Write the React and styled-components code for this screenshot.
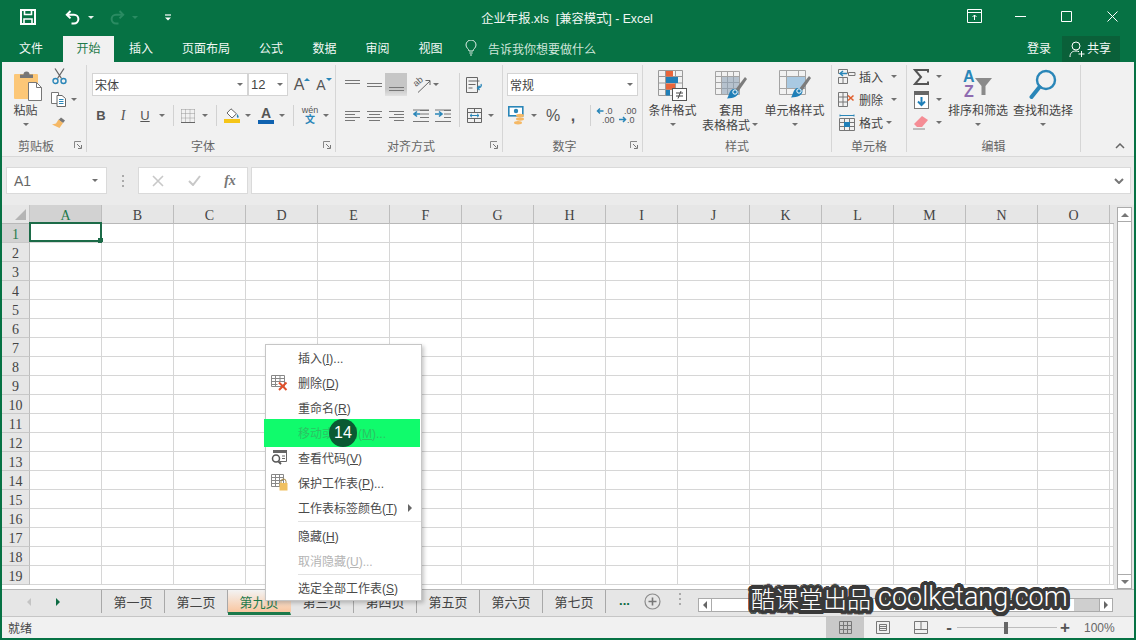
import React from 'react';
import styled, { createGlobalStyle } from 'styled-components';

const UI_FONT = '"Liberation Sans", "Noto Sans CJK SC", sans-serif';
const GREEN = '#067244';
const BLUE = '#2a86b8';

const GlobalStyle = createGlobalStyle`
  html, body { margin: 0; padding: 0; background: #fff; }
  * { box-sizing: border-box; }
  body { font-family: ${UI_FONT}; font-size: 12px; color: #444; }
`;

// dark rounded halo behind the watermark letters
const haloAt = radius =>
  Array.from({ length: 24 }, (_, i) => {
    const a = (i / 24) * Math.PI * 2;
    return `${(Math.cos(a) * radius).toFixed(1)}px ${(Math.sin(a) * radius).toFixed(1)}px 0 #3a3a3a`;
  }).join(', ');
const HALO = `${haloAt(4)}, ${haloAt(2.5)}, ${haloAt(1)}`;

// window frame
const Window = styled.div`
  position: relative;
  display: flex;
  flex-direction: column;
  width: 1136px;
  height: 640px;
  padding: 0 2px 2px;
  background: ${GREEN};
  overflow: hidden;
`;

// title bar
const TitleBar = styled.div`
  display: grid;
  grid-template-columns: 1fr auto 1fr;
  align-items: center;
  height: 36px;
  color: #fff;
`;
const Qat = styled.div`
  display: flex;
  align-items: center;
  padding: 0 0 2px 17px;
`;
const QatBtn = styled.span`
  display: flex;
  align-items: center;
  justify-content: center;
  width: ${p => p.$w}px;
  height: 24px;
  margin-left: ${p => p.$ml || 0}px;
`;
const QatCaret = styled.span`
  display: flex;
  justify-content: center;
  width: ${p => p.$w}px;
  margin-left: ${p => p.$ml || 0}px;
  &::after {
    content: '';
    border-left: 3px solid transparent;
    border-right: 3px solid transparent;
    border-top: 3px solid ${p => (p.$dim ? '#2a8b62' : '#e8f2ed')};
  }
`;
const Title = styled.div`
  font-size: 12.3px;
  white-space: pre;
  padding: 0 2px 0 0;
  color: #f2f7f4;
`;
const WinControls = styled.div`
  display: flex;
  justify-content: flex-end;
  margin-right: -1px;
  padding-bottom: 4px;
`;
const WinBtn = styled.span`
  display: flex;
  align-items: center;
  justify-content: center;
  width: 46px;
  height: 32px;
`;

// ribbon tabs
const TabsRow = styled.div`
  display: flex;
  align-items: stretch;
  height: 26px;
  color: #f3f8f5;
`;
const RibbonTab = styled.div`
  display: flex;
  align-items: center;
  justify-content: center;
  width: ${p => p.$w}px;
  padding: 0 ${p => p.$pr || 0}px 3px 0;
  background: ${p => (p.$active ? '#f1f1f1' : 'transparent')};
  color: ${p => (p.$active ? '#1f7a4c' : 'inherit')};
`;
const TellMe = styled.div`
  display: flex;
  align-items: center;
  gap: 11px;
  margin-left: 5px;
  padding: 0 0 2px 3px;
  color: #cfe5da;
`;
const Login = styled.div`
  display: flex;
  align-items: center;
  margin-left: auto;
  margin-right: 11px;
  padding-bottom: 4px;
`;
const ShareBtn = styled.div`
  display: flex;
  align-items: center;
  gap: 2px;
  width: 58px;
  padding-left: 7px;
  margin-right: 14px;
  background: #0a6039;
`;
const ShareText = styled.span`
  padding-bottom: 4px;
`;

// ribbon
const Ribbon = styled.div`
  display: flex;
  height: 95px;
  padding-top: 3px;
  background: #f1f1f1;
  border-bottom: 1px solid #d8d8d8;
`;
const Group = styled.div`
  display: flex;
  flex-direction: column;
  width: ${p => p.$w}px;
  height: 87px;
  border-right: 1px solid #d6d6d6;
`;
const GroupBody = styled.div`
  display: flex;
  height: 73px;
  padding-left: ${p => p.$pl || 0}px;
`;
const GroupLabel = styled.div`
  display: flex;
  align-items: center;
  height: 14px;
  color: #666;
`;
const LabelText = styled.span`
  flex: 1;
  text-align: center;
`;
const Launcher = styled.span`
  display: flex;
  justify-content: center;
  width: 16px;
`;
const Collapse = styled.div`
  flex: 1;
  display: flex;
  align-items: flex-end;
  justify-content: flex-end;
  padding: 0 9px 7px 0;
`;
const Rows = styled.div`
  display: flex;
  flex-direction: column;
  gap: 8px;
  padding-top: 8px;
  width: ${p => (p.$w ? `${p.$w}px` : 'auto')};
`;
const Row = styled.div`
  display: flex;
  align-items: center;
  height: 23px;
`;
const Stack = styled.div`
  display: flex;
  flex-direction: column;
  width: ${p => p.$w}px;
`;
const Tool = styled.span`
  display: flex;
  align-items: center;
  justify-content: center;
  width: ${p => p.$w || 22}px;
  height: 23px;
  margin-left: ${p => p.$ml || 0}px;
  background: ${p => (p.$on ? 'linear-gradient(#c6c6c6 70%, #e2e2e2)' : 'transparent')};
`;
const Caret = styled.span`
  display: flex;
  align-items: center;
  justify-content: center;
  width: ${p => p.$w || 10}px;
  height: ${p => p.$h || 23}px;
  margin-left: ${p => p.$ml || 0}px;
  &::after {
    content: '';
    border-left: 3px solid transparent;
    border-right: 3px solid transparent;
    border-top: 3px solid #707070;
  }
`;
const VSep = styled.span`
  width: 1px;
  height: ${p => p.$h || 21}px;
  margin: ${p => p.$mt || 0}px ${p => p.$r || 0}px 0 ${p => p.$l || 0}px;
  background: #d2d2d2;
`;
const Select = styled.div`
  display: flex;
  align-items: center;
  justify-content: space-between;
  width: ${p => p.$w}px;
  height: 23px;
  margin-left: ${p => p.$ml || 0}px;
  padding: 0 4px 0 2px;
  background: #fff;
  border: 1px solid #d4d4d4;
  font-size: ${p => p.$fs || 12}px;
`;
const LargeBtn = styled.div`
  display: flex;
  flex-direction: column;
  align-items: center;
  width: ${p => p.$w}px;
  white-space: nowrap;
`;
const LargeIcon = styled.div`
  display: flex;
  align-items: center;
  justify-content: center;
  height: 37px;
  padding: 3px 0 0 ${p => p.$pl || 0}px;
`;
const LargeText = styled.div`
  display: flex;
  align-items: center;
  height: 15px;
`;
const CellRow = styled.div`
  display: flex;
  align-items: center;
  height: 23px;
  padding-left: 3px;
`;
const CellText = styled.span`
  width: 24px;
  margin-right: ${p => p.$mr}px;
`;
const FontLetter = styled.span`
  font-size: ${p => p.$fs}px;
  font-weight: ${p => (p.$bold ? 700 : 400)};
  font-style: ${p => (p.$italic ? 'italic' : 'normal')};
  font-family: ${p => (p.$serif ? '"Liberation Serif", serif' : UI_FONT)};
  text-decoration: ${p => (p.$under ? 'underline' : 'none')};
  color: #555;
  line-height: 1;
`;
const Mark = styled.span`
  align-self: flex-start;
  margin: 5px -6px 0 0;
  border-left: 3px solid transparent;
  border-right: 3px solid transparent;
  ${p => (p.$down ? `border-top: 3px solid ${BLUE};` : `border-bottom: 3px solid ${BLUE};`)}
`;
const ColorA = styled.span`
  display: flex;
  flex-direction: column;
  align-items: center;
  width: 16px;
  font-size: 14px;
  font-weight: 700;
  line-height: 12px;
  color: #555;
  &::after {
    content: '';
    width: 16px;
    height: 4px;
    margin-top: 1px;
    background: #0f62b0;
  }
`;
const PhoneticBtn = styled.span`
  display: flex;
  flex-direction: column;
  align-items: center;
  font-size: 9px;
  line-height: 9px;
  color: #555;
  & b {
    font-size: 10px;
    line-height: 10px;
    color: ${BLUE};
  }
`;
const PercentMark = styled.span`
  font-size: 16px;
  font-weight: ${p => (p.$bold ? 700 : 400)};
  color: #555;
`;

// formula bar
const FormulaBar = styled.div`
  display: flex;
  align-items: flex-start;
  height: 48px;
  padding: 10px 3px 0 4px;
  background: #ebebeb;
`;
const NameBox = styled.div`
  display: flex;
  align-items: center;
  justify-content: space-between;
  width: 101px;
  height: 27px;
  padding: 0 7px;
  background: #fff;
  border: 1px solid #dadada;
  font-size: 14px;
  color: #666;
`;
const GripDots = styled.span`
  display: flex;
  justify-content: center;
  width: 31px;
  height: 27px;
  align-items: center;
`;
const FxBox = styled.div`
  display: grid;
  grid-template-columns: 37px 37px 1fr;
  align-items: center;
  justify-items: center;
  width: 110px;
  height: 27px;
  background: #fff;
  border: 1px solid #dadada;
`;
const FxText = styled.span`
  font-family: "Liberation Serif", serif;
  font-style: italic;
  font-weight: 700;
  font-size: 14px;
  color: #777;
`;
const FormulaInput = styled.div`
  flex: 1;
  display: flex;
  align-items: center;
  justify-content: flex-end;
  height: 27px;
  margin-left: 3px;
  padding-right: 6px;
  background: #fff;
  border: 1px solid #dadada;
`;

// worksheet
const SheetArea = styled.div`
  display: flex;
  height: 384px;
  background: #e6e6e6;
`;
const Grid = styled.div`
  display: grid;
  grid-template-columns: 28px repeat(15, 72px) 4px;
  grid-auto-rows: 19px;
  width: 1112px;
  background: #fff;
  font-family: "Liberation Serif", serif;
  font-size: 14px;
  color: #444;
`;
const Corner = styled.div`
  display: flex;
  align-items: flex-end;
  justify-content: flex-end;
  padding: 0 3px 3px 0;
  background: #e6e6e6;
  border-right: 1px solid #c4c4c4;
  border-bottom: 1px solid #b8b8b8;
  &::after {
    content: '';
    border-left: 11px solid transparent;
    border-bottom: 11px solid #b4b4b4;
  }
`;
const ColHead = styled.div`
  display: flex;
  justify-content: center;
  align-items: flex-end;
  line-height: 15px;
  background: ${p => (p.$active ? '#d2d2d2' : '#e6e6e6')};
  color: ${p => (p.$active ? '#1f7a4c' : '#444')};
  border-right: 1px solid #bdbdbd;
  border-bottom: 1px solid #b8b8b8;
`;
const HeadFiller = styled.div`
  background: #e6e6e6;
  border-bottom: 1px solid #b8b8b8;
`;
const RowHead = styled.div`
  display: flex;
  justify-content: center;
  align-items: center;
  padding-top: 4px;
  background: ${p => (p.$active ? '#d2d2d2' : '#e6e6e6')};
  color: ${p => (p.$active ? '#1f7a4c' : '#444')};
  border-right: 1px solid #bdbdbd;
  border-bottom: 1px solid #c8c8c8;
`;
const Cell = styled.div`
  position: relative;
  border-right: 1px solid #d6d6d6;
  border-bottom: 1px solid #d6d6d6;
`;
const Selection = styled.div`
  position: absolute;
  top: -2px;
  left: -1px;
  right: -1px;
  bottom: 0;
  border: 2px solid #1c6b48;
  &::after {
    content: '';
    position: absolute;
    right: -3px;
    bottom: -3px;
    width: 5px;
    height: 5px;
    background: #1c6b48;
  }
`;
const VScroll = styled.div`
  display: flex;
  flex-direction: column;
  width: 15px;
  margin: 2px 0 0 3px;
  background: #fff;
  border-left: 1px solid #ababab;
  border-right: 1px solid #ababab;
`;
const ScrollBtn = styled.span`
  display: flex;
  align-items: center;
  justify-content: center;
  flex: none;
  height: 15px;
  background: #fff;
  border: 1px solid #ababab;
  margin: 0 -1px;
`;
const ScrollSpace = styled.div`
  flex: 1;
`;
const Tri = styled.span`
  width: 0;
  height: 0;
  ${p => p.$dir === 'up' && `border-left:4px solid transparent;border-right:4px solid transparent;border-bottom:4px solid ${p.$c || '#777'};`}
  ${p => p.$dir === 'down' && `border-left:4px solid transparent;border-right:4px solid transparent;border-top:4px solid ${p.$c || '#777'};`}
  ${p => p.$dir === 'left' && `border-top:4px solid transparent;border-bottom:4px solid transparent;border-right:4px solid ${p.$c || '#777'};`}
  ${p => p.$dir === 'right' && `border-top:4px solid transparent;border-bottom:4px solid transparent;border-left:4px solid ${p.$c || '#777'};`}
`;

// sheet tabs
const TabBar = styled.div`
  display: flex;
  align-items: flex-start;
  height: 28px;
  background: #e6e6e6;
  border-top: 1px solid #b8b8b8;
  border-bottom: 1px solid #c6c6c6;
`;
const TabNav = styled.div`
  display: flex;
  align-items: center;
  gap: 25px;
  width: 100px;
  height: 23px;
  padding-left: 25px;
  border-right: 1px solid #a8a8a8;
`;
const SheetTab = styled.div`
  display: flex;
  align-items: center;
  justify-content: center;
  width: 63px;
  height: ${p => (p.$active ? 25 : 23)}px;
  font-size: 13px;
  color: ${p => (p.$active ? '#1f7a4c' : '#444')};
  border-right: 1px solid ${p => (p.$active ? 'transparent' : '#a8a8a8')};
  background: ${p => (p.$active ? 'linear-gradient(#f3f3f3, #f9c6a0)' : 'transparent')};
  border-bottom: ${p => (p.$active ? '3px solid #1c7a4b' : '0')};
`;
const TabMore = styled.span`
  width: 37px;
  margin-top: 4px;
  text-align: center;
  font-weight: 700;
  font-size: 13px;
  line-height: 14px;
  color: #0d6b43;
`;
const AddSheet = styled.span`
  display: flex;
  margin: 3px 0 0 1px;
`;
const TabGrip = styled.span`
  display: flex;
  justify-content: center;
  width: 36px;
  margin: 3px 0 0 1px;
`;
const HScroll = styled.div`
  display: flex;
  width: 415px;
  height: 14px;
  margin-top: 8px;
  background: #cfcfcf;
  border-top: 1px solid #ababab;
  border-bottom: 1px solid #ababab;
`;
const HBtn = styled.span`
  display: flex;
  align-items: center;
  justify-content: center;
  width: 14px;
  margin: -1px 0;
  background: #fff;
  border: 1px solid #ababab;
`;
const HThumb = styled.div`
  width: 362px;
  background: #fff;
`;
const HTrack = styled.div`
  flex: 1;
`;

// status bar
const StatusBar = styled.div`
  display: flex;
  align-items: stretch;
  height: 21px;
  background: #f1f1f1;
  padding: 0 11px 0 6px;
`;
const StatusText = styled.span`
  display: flex;
  align-items: center;
  margin-right: auto;
`;
const ViewBtn = styled.span`
  display: flex;
  align-items: center;
  justify-content: center;
  width: 38px;
  background: ${p => (p.$on ? '#c9c9c9' : 'transparent')};
`;
const ZoomSlider = styled.div`
  display: flex;
  align-items: center;
  width: 133px;
  padding-left: 1px;
`;
const ZoomSign = styled.span`
  width: 16px;
  text-align: center;
  font-size: 17px;
  font-weight: 700;
  line-height: 18px;
  color: #555;
`;
const ZoomLine = styled.span`
  flex: ${p => p.$f};
  height: 1px;
  background: #bdbdbd;
`;
const ZoomThumb = styled.span`
  width: 4px;
  height: 12px;
  background: #666;
`;
const ZoomValue = styled.span`
  display: flex;
  align-items: center;
  width: 50px;
  padding-left: 11px;
  color: #666;
`;

// context menu
const Menu = styled.div`
  position: absolute;
  left: 265px;
  top: 344px;
  width: 157px;
  background: #fff;
  border: 1px solid #c6c6c6;
  box-shadow: 2px 2px 4px rgba(0, 0, 0, 0.22);
`;
const MenuItem = styled.div`
  position: relative;
  display: flex;
  align-items: center;
  height: 25px;
  padding-right: 9px;
  color: ${p => (p.$disabled ? '#b4b4b4' : p.$hl ? '#2cc263' : '#4a4a4a')};
  ${p =>
    p.$hl &&
    `&::before {
      content: '';
      position: absolute;
      left: -2px;
      right: 1px;
      top: -1px;
      bottom: -2px;
      background: #10fb6c;
    }`}
`;
const MenuIcon = styled.span`
  position: relative;
  display: flex;
  align-items: center;
  justify-content: center;
  flex: none;
  width: 32px;
  padding-right: 6px;
`;
const MenuLabel = styled.span`
  position: relative;
  flex: 1;
  white-space: nowrap;
`;
const MenuSep = styled.div`
  height: ${p => p.$h}px;
  margin-left: 32px;
  padding-top: 1px;
  &::after {
    content: '';
    display: block;
    height: 1px;
    background: #e2e2e2;
  }
`;
const StepBadge = styled.div`
  position: absolute;
  left: 329px;
  top: 419px;
  display: flex;
  align-items: center;
  justify-content: center;
  width: 28px;
  height: 28px;
  border-radius: 50%;
  background: #0a5a33;
  color: #fff;
  font-size: 16px;
`;
const Watermark = styled.div`
  position: absolute;
  left: 751px;
  top: 579px;
  display: flex;
  align-items: center;
  gap: 7px;
  height: 36px;
  color: #fff;
  white-space: nowrap;
  text-shadow: ${HALO};
`;
const MarkCn = styled.span`
  font-family: "Noto Sans CJK SC", sans-serif;
  font-size: 24px;
  font-weight: 300;
`;
const MarkEn = styled.span`
  font-family: Roboto, "Liberation Sans", sans-serif;
  font-size: 27px;
  font-weight: 300;
`;

// icons
const Svg = styled.svg`
  display: block;
  flex: none;
`;
const Ico = ({ w, h, children }) => (
  <Svg width={w} height={h} viewBox={`0 0 ${w} ${h}`} fill="none">
    {children}
  </Svg>
);

const SaveIcon = () => (
  <Ico w={16} h={16}>
    <path d="M1 1h14v14H1z" stroke="#fff" strokeWidth="2" />
    <path d="M4.5 1v4.5h7V1M4 15v-5h8v5" stroke="#fff" strokeWidth="1.6" />
  </Ico>
);
const UndoIcon = ({ c = '#fff', flip }) => (
  <Ico w={15} h={15}>
    <g transform={flip ? 'translate(15 0) scale(-1 1)' : undefined} stroke={c} strokeWidth="2">
      <path d="M5.5 1L1.8 4.7l3.7 3.7" />
      <path d="M2 4.7h7a4.4 4.4 0 0 1 0 8.8H6.5" />
    </g>
  </Ico>
);
const QatMore = () => (
  <Ico w={8} h={7}>
    <path d="M1 1h6" stroke="#fff" strokeWidth="1.2" />
    <path d="M1 3.5h6L4 6.5z" fill="#fff" />
  </Ico>
);
const DisplayIcon = () => (
  <Ico w={15} h={14}>
    <path d="M.5.5h14v13H.5zM.5 3.5h14" stroke="#fff" />
    <path d="M7.5 11V6M5.5 8l2-2 2 2" stroke="#fff" />
  </Ico>
);
const MinIcon = () => (
  <Ico w={11} h={11}>
    <path d="M0 5.5h11" stroke="#fff" />
  </Ico>
);
const MaxIcon = () => (
  <Ico w={11} h={11}>
    <path d="M.5.5h10v10H.5z" stroke="#fff" />
  </Ico>
);
const CloseIcon = () => (
  <Ico w={11} h={11}>
    <path d="M.5.5l10 10M10.5.5l-10 10" stroke="#fff" />
  </Ico>
);
const BulbIcon = () => (
  <Ico w={12} h={16}>
    <path d="M4 11c0-2-3-3-3-6a5 5 0 0 1 10 0c0 3-3 4-3 6z" stroke="#dfeee7" />
    <path d="M4.3 13h3.4M5 15h2" stroke="#dfeee7" />
  </Ico>
);
const PersonIcon = () => (
  <Ico w={16} h={18}>
    <circle cx="7" cy="6" r="4" stroke="#fff" />
    <path d="M1 17c0-4 2-6 6-6 1 0 2 .2 3 .7" stroke="#fff" />
    <path d="M12.5 11v6M9.5 14h6" stroke="#fff" />
  </Ico>
);
const LauncherIcon = () => (
  <Ico w={8} h={8}>
    <path d="M.5 7V.5H7" stroke="#888" />
    <path d="M3 3l3.5 3.5M7.5 4v3.5H4" stroke="#777" />
  </Ico>
);
const PasteIcon = () => (
  <Ico w={29} h={31}>
    <rect x="0" y="4" width="24" height="25" rx="1" fill="#fcc777" />
    <path d="M6 8V4.5h3.5a3 3 0 0 1 6 0H19V8z" fill="#777" />
    <path d="M14.5 12.5h8l5 5v13h-13z" fill="#fff" stroke="#777" />
    <path d="M22.5 12.5v5h5" stroke="#777" />
  </Ico>
);
const CutIcon = () => (
  <Ico w={15} h={17}>
    <path d="M3 .5l6.5 10M12 .5L5.5 10.5" stroke="#666" strokeWidth="1.3" />
    <circle cx="3.5" cy="13" r="2.5" stroke={BLUE} strokeWidth="1.4" />
    <circle cx="11.5" cy="13" r="2.5" stroke={BLUE} strokeWidth="1.4" />
  </Ico>
);
const CopyIcon = () => (
  <Ico w={15} h={15}>
    <path d="M.5.5h7v11h-7z" fill="#fff" stroke="#777" />
    <path d="M6 3.5h5l3.500 3v8H6z" fill="#fff" stroke="#666" />
    <path d="M8 7.5h4.500M8 9.5h4.500M8 11.5h4.500" stroke={BLUE} />
  </Ico>
);
const BrushIcon = () => (
  <Ico w={16} h={14}>
    <path d="M10 1.5l4 3-2 2.5-4.5-3z" fill="#777" />
    <path d="M7.5 3.5L12 7l-3.5 5L1 8.5l4-1z" fill="#f5b865" />
  </Ico>
);
const BorderIcon = () => (
  <Ico w={14} h={14}>
    <path d="M.5.5h13M.5 4.5h13M.5 9h13M.5.5v13M4.5.5v13M9 .5v13M13.5.5v13" stroke="#999" strokeDasharray="1 1" />
    <path d="M0 13.5h14" stroke="#666" />
  </Ico>
);
const FillIcon = () => (
  <Ico w={17} h={15}>
    <path d="M7 .8l5.5 5-4.500 4.200-5-5z" stroke="#666" fill="#fff" />
    <path d="M13 6c1.5 1.5 2 2.5 1.5 3.5-.7.7-1.6.2-1.6-.8z" fill={BLUE} />
    <rect x="0" y="11" width="16" height="4" fill="#f5c518" />
  </Ico>
);
const Lines = ({ rows, w = 15, h = 14 }) => (
  <Ico w={w} h={h}>
    {rows.map(([a, b, y], i) => (
      <path key={i} d={`M${a} ${y}.5H${b}`} stroke="#777" />
    ))}
  </Ico>
);
const OrientIcon = () => (
  <Ico w={20} h={19}>
    <text x="5" y="12" transform="rotate(-40 5 12)" fontSize="9" fontFamily="Liberation Sans" fill="#555">ab</text>
    <path d="M7 17.5L19 6M14.5 5.5H19V10" stroke="#666" />
  </Ico>
);
const IndentIcon = ({ right }) => (
  <Ico w={16} h={14}>
    <path d={right ? 'M9 1.5h7M9 5h7M9 8.5h7M0 12.5h16M0 1h16' : 'M7 1.5h9M7 5h9M7 8.5h9M0 12.5h16M0 1h16'} stroke="#777" />
    <path d={right ? 'M0 5h6M4 2.5L7 5 4 7.5' : 'M7 5H1M4 2.5L1 5l3 2.5'} stroke={BLUE} strokeWidth="1.6" />
  </Ico>
);
const WrapIcon = () => (
  <Ico w={17} h={16}>
    <path d="M.5.5h11v15H.5z" stroke="#666" />
    <path d="M2.5 4h11M2.5 7.5h7M2.5 11h4" stroke="#666" />
    <path d="M15 7c1 2-.5 4-3.5 4M13.5 8.8l-2 2.2 2 2" stroke={BLUE} strokeWidth="1.3" />
  </Ico>
);
const MergeIcon = () => (
  <Ico w={15} h={15}>
    <path d="M.5.5h14v14H.5zM.5 4.5h14M.5 10.5h14M7.5.5v4M7.5 10.5v4" stroke="#666" />
    <path d="M3 7.5h9M5 5.8L3 7.5l2 1.7M10 5.8l2 1.7-2 1.7" stroke={BLUE} />
  </Ico>
);
const AccountingIcon = () => (
  <Ico w={20} h={20}>
    <rect x=".8" y=".8" width="14" height="9" fill="#fff" stroke={BLUE} strokeWidth="1.6" />
    <circle cx="8" cy="5" r="2.2" fill={BLUE} />
    <ellipse cx="12" cy="9.5" rx="4" ry="1.7" fill="#f5b865" />
    <ellipse cx="12" cy="13" rx="4" ry="1.7" fill="#f5b865" />
    <ellipse cx="10" cy="16.8" rx="4" ry="1.7" fill="#f5b865" />
  </Ico>
);
const DecimalIcon = ({ more }) => (
  <Ico w={19} h={20}>
    <text x={more ? 6 : 9} y="8" fontSize="9" fontFamily="Liberation Sans" fill="#555">{more ? '.00' : '.0'}</text>
    <text x={more ? 9 : 6} y="17" fontSize="9" fontFamily="Liberation Sans" fill="#555">{more ? '.0' : '.00'}</text>
    {more ? (
      <path d="M1 13.5h6M5 11l2.5 2.5L5 16" stroke={BLUE} strokeWidth="1.5" />
    ) : (
      <path d="M7.5 5H1.5M4 2.5L1.5 5 4 7.5" stroke={BLUE} strokeWidth="1.5" />
    )}
  </Ico>
);
const CondIcon = () => (
  <Ico w={29} h={31}>
    <path d="M.5.5h24v25H.5zM.5 6.5h24M.5 13h24M.5 19.5h24M7.5.5v25M17.5.5v25" stroke="#9a9a9a" />
    <rect x="8" y="1" width="7" height="5.5" fill="#e9653a" />
    <rect x="8" y="7" width="12" height="6" fill="#1f7fb8" />
    <rect x="8" y="13.5" width="9" height="6" fill="#e9653a" />
    <rect x="8" y="20" width="4" height="5.5" fill="#1f7fb8" />
    <rect x="14.5" y="18.5" width="14" height="12" fill="#fff" stroke="#555" />
    <path d="M18 23h7M18 26h7M23 21l-3 7.5" stroke="#444" />
  </Ico>
);
const BrushOver = () => (
  <g>
    <path d="M30 6l2 2-9 13-3-2z" fill="#7c7c7c" />
    <path d="M18 18c3-.5 5.5 1 5.5 3.5 0 3-4.5 6-11.5 6 2-2.5 2-8 6-9.5z" fill="#1f7fb8" />
    <circle cx="20" cy="21" r="2.2" stroke="#fff" />
  </g>
);
const TableStyleIcon = () => (
  <Ico w={32} h={29}>
    <path d="M.5.5h24v23H.5zM.5 5.5h24M.5 11.5h24M.5 17.5h24M6.5.5v23M12.5.5v23M18.5.5v23" stroke="#a4a4a4" />
    <rect x="7" y="6" width="17" height="17" fill="#8fa3b8" opacity=".6" />
    <BrushOver />
  </Ico>
);
const CellStyleIcon = () => (
  <Ico w={32} h={30}>
    <path d="M.5.5h26v24H.5zM.5 6.5h26M.5 18.5h26M7.5.5v24M19.5.5v24" stroke="#a4a4a4" />
    <rect x="8" y="7" width="18" height="11" fill="#a9c9e2" />
    <BrushOver />
  </Ico>
);
const InsertIcon = () => (
  <Ico w={18} h={15}>
    <path d="M.5 8.5h9v6h-9zM5 8.5v6M.5 .5h9v4h-9z" stroke="#777" />
    <path d="M10.5 3.5h6.5v3h-6.5z" stroke="#777" />
    <path d="M9 4.5H2M5 2L2 4.5 5 7" stroke={BLUE} strokeWidth="1.5" />
  </Ico>
);
const DeleteCellIcon = () => (
  <Ico w={18} h={15}>
    <path d="M.5.5h9v14h-9zM.5 5h9M.5 10h9M5 .5v14" stroke="#777" />
    <path d="M10 3.5l5.5 5M15.5 3.5L10 8.5" stroke="#e0602f" strokeWidth="1.6" />
  </Ico>
);
const FormatCellIcon = () => (
  <Ico w={16} h={17}>
    <path d="M.5 4.5h15v12H.5zM.5 8.5h15M.5 12.5h15M5.5 4.5v12M10.5 4.5v12" stroke="#777" />
    <rect x="5" y="8" width="6" height="5" fill="#1f7fb8" />
    <path d="M1 1.5h14M1 .5v2M15 .5v2" stroke={BLUE} />
  </Ico>
);
const SigmaIcon = () => (
  <Ico w={16} h={16}>
    <path d="M15 3.5V1H2l6 7-6 7h13v-2.5" stroke="#555" strokeWidth="2" />
  </Ico>
);
const FillDownIcon = () => (
  <Ico w={15} h={18}>
    <rect x=".5" y=".5" width="14" height="17" fill="#fff" stroke="#777" />
    <rect x="0" y="0" width="15" height="4" fill="#666" />
    <path d="M7.5 6v8M4 10.5l3.5 3.5 3.5-3.5" stroke="#1f7fb8" strokeWidth="2" />
  </Ico>
);
const EraserIcon = () => (
  <Ico w={16} h={15}>
    <path d="M9 1l6 4-6 7H4L1 9z" fill="#f58d95" />
    <path d="M0 14h12" stroke="#888" />
  </Ico>
);
const SortIcon = () => (
  <Ico w={30} h={34}>
    <text x="0" y="14" fontSize="16" fontWeight="700" fontFamily="Liberation Sans" fill="#2a86b8">A</text>
    <text x="1" y="29" fontSize="16" fontWeight="700" fontFamily="Liberation Sans" fill="#8e6bb0">Z</text>
    <path d="M12 10h17l-6.5 8v9h-4v-9z" fill="#8a8a8a" />
  </Ico>
);
const FindIcon = () => (
  <Ico w={28} h={32}>
    <circle cx="17" cy="11" r="9" stroke="#2a86b8" strokeWidth="2.4" />
    <path d="M10.5 18L2.5 28" stroke="#2a86b8" strokeWidth="4" strokeLinecap="round" />
  </Ico>
);
const CollapseIcon = () => (
  <Ico w={10} h={6}>
    <path d="M1 5l4-4 4 4" stroke="#666" strokeWidth="1.5" />
  </Ico>
);
const ChevronIcon = () => (
  <Ico w={10} h={6}>
    <path d="M1 1l4 4 4-4" stroke="#777" strokeWidth="2" />
  </Ico>
);
const GripIcon = () => (
  <Ico w={2} h={12}>
    <path d="M1 0v2M1 5v2M1 10v2" stroke="#aaa" strokeWidth="2" />
  </Ico>
);
const CrossIcon = () => (
  <Ico w={12} h={12}>
    <path d="M1 1l10 10M11 1L1 11" stroke="#c8c8c8" strokeWidth="1.6" />
  </Ico>
);
const CheckIcon = () => (
  <Ico w={13} h={11}>
    <path d="M1 6l4 4 7-9" stroke="#c8c8c8" strokeWidth="2" />
  </Ico>
);
const PlusCircle = () => (
  <Ico w={17} h={17}>
    <circle cx="8.5" cy="8.5" r="7.5" stroke="#8c8c8c" strokeWidth="1.2" />
    <path d="M8.5 4.5v8M4.5 8.5h8" stroke="#777" strokeWidth="1.6" />
  </Ico>
);
const NormalViewIcon = () => (
  <Ico w={13} h={13}>
    <path d="M.5.5h12v12H.5zM.5 4.5h12M.5 8.5h12M4.5.5v12M8.5.5v12" stroke="#777" />
  </Ico>
);
const LayoutViewIcon = () => (
  <Ico w={14} h={13}>
    <path d="M.5.5h13v12H.5z" stroke="#777" />
    <path d="M3.5 3.5h7v6h-7zM3.5 5.5h7M3.5 7.5h7" stroke="#777" />
  </Ico>
);
const BreakViewIcon = () => (
  <Ico w={14} h={13}>
    <path d="M.5.5h13v12H.5zM.5 8.5h13M7 .5v8" stroke="#777" />
  </Ico>
);
const MenuDeleteIcon = () => (
  <Ico w={17} h={16}>
    <path d="M.5.5h13v11H.5zM.5 3.5h13M.5 6.5h13M.5 9.5h6M4.5.5v11M9 .5v6" stroke="#888" />
    <path d="M8 7.5l7.5 7.5M15.5 7.5L8 15" stroke="#e0502a" strokeWidth="2" />
  </Ico>
);
const MenuCodeIcon = () => (
  <Ico w={16} h={15}>
    <path d="M2.5.5h13v11H9" stroke="#666" />
    <rect x="2" y="0" width="14" height="3" fill="#666" />
    <path d="M11 6h3M11 8.5h3" stroke="#666" />
    <circle cx="5" cy="8.5" r="3.5" stroke="#555" strokeWidth="1.5" />
    <path d="M7.5 11.5L10 14" stroke="#555" strokeWidth="1.8" />
  </Ico>
);
const MenuProtectIcon = () => (
  <Ico w={17} h={17}>
    <path d="M.5.5h12v12H.5zM.5 3.5h12M.5 6.5h12M.5 9.5h12M4.5.5v12M8.5.5v12" stroke="#888" />
    <path d="M10 9V7.5a2.500 2.500 0 0 1 5 0V9" stroke="#a98a40" />
    <rect x="8.5" y="9" width="8" height="7.5" fill="#f0c060" />
  </Ico>
);

const columns = 'ABCDEFGHIJKLMNO'.split('');
const rowNumbers = Array.from({ length: 19 }, (_, i) => i + 1);
const ribbonTabs = [
  { label: '文件', w: 61, pr: 3 },
  { label: '开始', w: 51, active: true },
  { label: '插入', w: 54 },
  { label: '页面布局', w: 76 },
  { label: '公式', w: 54 },
  { label: '数据', w: 53 },
  { label: '审阅', w: 53 },
  { label: '视图', w: 53 },
];
const sheets = ['第一页', '第二页', '第九页', '第三页', '第四页', '第五页', '第六页', '第七页'];

const SheetGrid = () => (
  <Grid>
    <Corner />
    {columns.map(c => (
      <ColHead key={c} $active={c === 'A'}>{c}</ColHead>
    ))}
    <HeadFiller />
    {rowNumbers.map(n => (
      <React.Fragment key={n}>
        <RowHead $active={n === 1}>{n}</RowHead>
        {columns.map(c => (
          <Cell key={c}>{n === 1 && c === 'A' && <Selection />}</Cell>
        ))}
        <Cell />
      </React.Fragment>
    ))}
  </Grid>
);

const ContextMenu = () => (
  <Menu>
    <MenuItem><MenuIcon /><MenuLabel>插入(<u>I</u>)...</MenuLabel></MenuItem>
    <MenuItem><MenuIcon><MenuDeleteIcon /></MenuIcon><MenuLabel>删除(<u>D</u>)</MenuLabel></MenuItem>
    <MenuItem><MenuIcon /><MenuLabel>重命名(<u>R</u>)</MenuLabel></MenuItem>
    <MenuItem $hl><MenuIcon /><MenuLabel>移动或复制(<u>M</u>)...</MenuLabel></MenuItem>
    <MenuItem><MenuIcon><MenuCodeIcon /></MenuIcon><MenuLabel>查看代码(<u>V</u>)</MenuLabel></MenuItem>
    <MenuItem><MenuIcon><MenuProtectIcon /></MenuIcon><MenuLabel>保护工作表(<u>P</u>)...</MenuLabel></MenuItem>
    <MenuItem><MenuIcon /><MenuLabel>工作表标签颜色(<u>T</u>)</MenuLabel><Tri $dir="right" $c="#666" /></MenuItem>
    <MenuSep $h={3} />
    <MenuItem><MenuIcon /><MenuLabel>隐藏(<u>H</u>)</MenuLabel></MenuItem>
    <MenuItem $disabled><MenuIcon /><MenuLabel>取消隐藏(<u>U</u>)...</MenuLabel></MenuItem>
    <MenuSep $h={2} />
    <MenuItem><MenuIcon /><MenuLabel>选定全部工作表(<u>S</u>)</MenuLabel></MenuItem>
  </Menu>
);

const App = () => (
  <Window>
    <GlobalStyle />
    <TitleBar>
      <Qat>
        <QatBtn $w={18}><SaveIcon /></QatBtn>
        <QatBtn $w={21} $ml={25}><UndoIcon /></QatBtn>
        <QatCaret $w={8} $ml={4} />
        <QatBtn $w={22} $ml={11}><UndoIcon c="#2a8b62" flip /></QatBtn>
        <QatCaret $w={10} $ml={2} $dim />
        <QatBtn $w={28} $ml={14}><QatMore /></QatBtn>
      </Qat>
      <Title>企业年报.xls  [兼容模式] - Excel</Title>
      <WinControls>
        <WinBtn><DisplayIcon /></WinBtn>
        <WinBtn><MinIcon /></WinBtn>
        <WinBtn><MaxIcon /></WinBtn>
        <WinBtn><CloseIcon /></WinBtn>
      </WinControls>
    </TitleBar>

    <TabsRow>
      {ribbonTabs.map(t => (
        <RibbonTab key={t.label} $w={t.w} $pr={t.pr} $active={t.active}>{t.label}</RibbonTab>
      ))}
      <TellMe><BulbIcon />告诉我你想要做什么</TellMe>
      <Login>登录</Login>
      <ShareBtn><PersonIcon /><ShareText>共享</ShareText></ShareBtn>
    </TabsRow>

    <Ribbon>
      <Group $w={85}>
        <GroupBody>
          <LargeBtn $w={47}>
            <LargeIcon $pl={5}><PasteIcon /></LargeIcon>
            <LargeText>粘贴</LargeText>
            <Caret $h={15} />
          </LargeBtn>
          <Stack $w={37}>
            <Tool $w={20}><CutIcon /></Tool>
            <Row><Tool $w={18}><CopyIcon /></Tool><Caret $w={7} $ml={3} /></Row>
            <Tool $w={20}><BrushIcon /></Tool>
          </Stack>
        </GroupBody>
        <GroupLabel><LabelText>剪贴板</LabelText><Launcher><LauncherIcon /></Launcher></GroupLabel>
      </Group>

      <Group $w={249}>
        <GroupBody $pl={3}>
          <Rows>
            <Row>
              <Select $w={156} $ml={2}>宋体<Caret $w={7} /></Select>
              <Select $w={40} $fs={13}>12<Caret $w={7} /></Select>
              <Tool><FontLetter $fs={16}>A</FontLetter><Mark /></Tool>
              <Tool><FontLetter $fs={14}>A</FontLetter><Mark $down /></Tool>
            </Row>
            <Row>
              <Tool><FontLetter $fs={13} $bold>B</FontLetter></Tool>
              <Tool><FontLetter $fs={14} $italic $serif>I</FontLetter></Tool>
              <Tool><FontLetter $fs={13} $under>U</FontLetter></Tool>
              <Caret $w={12} />
              <VSep $l={5} $r={3} />
              <Tool><BorderIcon /></Tool>
              <Caret $w={12} />
              <VSep $l={5} $r={4} />
              <Tool><FillIcon /></Tool>
              <Caret $w={10} />
              <Tool $ml={2}><ColorA>A</ColorA></Tool>
              <Caret $w={10} />
              <VSep $l={6} $r={5} />
              <Tool><PhoneticBtn>wén<b>文</b></PhoneticBtn></Tool>
              <Caret $w={9} />
            </Row>
          </Rows>
        </GroupBody>
        <GroupLabel><LabelText>字体</LabelText><Launcher><LauncherIcon /></Launcher></GroupLabel>
      </Group>

      <Group $w={167}>
        <GroupBody $pl={5}>
          <Rows $w={118}>
            <Row>
              <Tool><Lines rows={[[0, 15, 2], [0, 15, 5]]} /></Tool>
              <Tool><Lines rows={[[0, 15, 5], [0, 15, 8]]} /></Tool>
              <Tool $on><Lines rows={[[0, 15, 9], [0, 15, 12]]} /></Tool>
              <Tool $ml={3}><OrientIcon /></Tool>
              <Caret $w={8} />
            </Row>
            <Row>
              <Tool><Lines rows={[[0, 15, 2], [0, 10, 5], [0, 15, 8], [0, 10, 11]]} /></Tool>
              <Tool><Lines rows={[[0, 15, 2], [2, 13, 5], [0, 15, 8], [2, 13, 11]]} /></Tool>
              <Tool><Lines rows={[[0, 15, 2], [5, 15, 5], [0, 15, 8], [5, 15, 11]]} /></Tool>
              <Tool $ml={3}><IndentIcon /></Tool>
              <Tool><IndentIcon right /></Tool>
            </Row>
          </Rows>
          <VSep $h={54} $mt={8} />
          <Rows>
            <Row><Tool $ml={3}><WrapIcon /></Tool></Row>
            <Row><Tool $ml={3}><MergeIcon /></Tool><Caret $w={12} /></Row>
          </Rows>
        </GroupBody>
        <GroupLabel><LabelText>对齐方式</LabelText><Launcher><LauncherIcon /></Launcher></GroupLabel>
      </Group>

      <Group $w={140}>
        <GroupBody $pl={4}>
          <Rows>
            <Row><Select $w={131}>常规<Caret $w={7} /></Select></Row>
            <Row>
              <Tool><AccountingIcon /></Tool>
              <Caret $w={10} />
              <Tool $ml={3}><PercentMark>%</PercentMark></Tool>
              <Tool $ml={-2}><PercentMark $bold>,</PercentMark></Tool>
              <VSep $l={6} $r={3} />
              <Tool><DecimalIcon /></Tool>
              <Tool><DecimalIcon more /></Tool>
            </Row>
          </Rows>
        </GroupBody>
        <GroupLabel><LabelText>数字</LabelText><Launcher><LauncherIcon /></Launcher></GroupLabel>
      </Group>

      <Group $w={189}>
        <GroupBody>
          <LargeBtn $w={59}>
            <LargeIcon><CondIcon /></LargeIcon>
            <LargeText>条件格式</LargeText>
            <Caret $h={15} />
          </LargeBtn>
          <LargeBtn $w={58}>
            <LargeIcon><TableStyleIcon /></LargeIcon>
            <LargeText>套用</LargeText>
            <LargeText>表格格式<Caret $w={10} /></LargeText>
          </LargeBtn>
          <LargeBtn $w={69}>
            <LargeIcon><CellStyleIcon /></LargeIcon>
            <LargeText>单元格样式</LargeText>
            <Caret $h={15} />
          </LargeBtn>
        </GroupBody>
        <GroupLabel><LabelText>样式</LabelText></GroupLabel>
      </Group>

      <Group $w={75}>
        <GroupBody>
          <Stack $w={74}>
            <CellRow><Tool $w={24}><InsertIcon /></Tool><CellText $mr={5}>插入</CellText><Caret $w={12} /></CellRow>
            <CellRow><Tool $w={24}><DeleteCellIcon /></Tool><CellText $mr={5}>删除</CellText><Caret $w={12} /></CellRow>
            <CellRow><Tool $w={24}><FormatCellIcon /></Tool><CellText $mr={0}>格式</CellText><Caret $w={12} /></CellRow>
          </Stack>
        </GroupBody>
        <GroupLabel><LabelText>单元格</LabelText></GroupLabel>
      </Group>

      <Group $w={174}>
        <GroupBody>
          <Stack $w={40}>
            <Row><Tool $ml={3}><SigmaIcon /></Tool><Caret $w={8} $ml={3} /></Row>
            <Row><Tool $ml={3}><FillDownIcon /></Tool><Caret $w={8} $ml={3} /></Row>
            <Row><Tool $ml={3}><EraserIcon /></Tool><Caret $w={8} $ml={3} /></Row>
          </Stack>
          <LargeBtn $w={62}>
            <LargeIcon><SortIcon /></LargeIcon>
            <LargeText>排序和筛选</LargeText>
            <Caret $h={15} />
          </LargeBtn>
          <LargeBtn $w={68}>
            <LargeIcon><FindIcon /></LargeIcon>
            <LargeText>查找和选择</LargeText>
            <Caret $h={15} />
          </LargeBtn>
        </GroupBody>
        <GroupLabel><LabelText>编辑</LabelText></GroupLabel>
      </Group>
      <Collapse><CollapseIcon /></Collapse>
    </Ribbon>

    <FormulaBar>
      <NameBox>A1<Caret $w={8} /></NameBox>
      <GripDots><GripIcon /></GripDots>
      <FxBox><CrossIcon /><CheckIcon /><FxText>fx</FxText></FxBox>
      <FormulaInput><ChevronIcon /></FormulaInput>
    </FormulaBar>

    <SheetArea>
      <SheetGrid />
      <VScroll>
        <ScrollBtn><Tri $dir="up" /></ScrollBtn>
        <ScrollSpace />
        <ScrollBtn><Tri $dir="down" /></ScrollBtn>
      </VScroll>
    </SheetArea>

    <TabBar>
      <TabNav>
        <Tri $dir="left" $c="#c4c4c4" />
        <Tri $dir="right" $c="#0d6b43" />
      </TabNav>
      {sheets.map((s, i) => (
        <SheetTab key={s} $active={i === 2}>{s}</SheetTab>
      ))}
      <TabMore>...</TabMore>
      <AddSheet><PlusCircle /></AddSheet>
      <TabGrip><GripIcon /></TabGrip>
      <HScroll>
        <HBtn><Tri $dir="left" $c="#666" /></HBtn>
        <HThumb />
        <HTrack />
        <HBtn><Tri $dir="right" $c="#666" /></HBtn>
      </HScroll>
    </TabBar>

    <StatusBar>
      <StatusText>就绪</StatusText>
      <ViewBtn $on><NormalViewIcon /></ViewBtn>
      <ViewBtn><LayoutViewIcon /></ViewBtn>
      <ViewBtn><BreakViewIcon /></ViewBtn>
      <ZoomSlider>
        <ZoomSign>-</ZoomSign>
        <ZoomLine $f={48} />
        <ZoomThumb />
        <ZoomLine $f={50} />
        <ZoomSign>+</ZoomSign>
      </ZoomSlider>
      <ZoomValue>100%</ZoomValue>
    </StatusBar>

    <ContextMenu />
    <StepBadge>14</StepBadge>
    <Watermark>
      <MarkCn>酷课堂出品</MarkCn>
      <MarkEn>coolketang.com</MarkEn>
    </Watermark>
  </Window>
);

export default App;
